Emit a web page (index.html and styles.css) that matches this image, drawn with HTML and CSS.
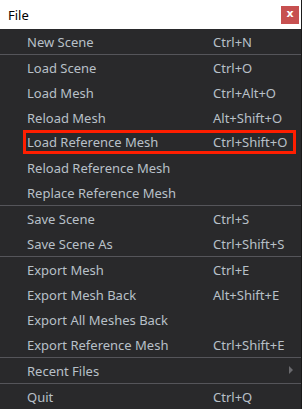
FILE: index.html
```html
<!DOCTYPE html>
<html>
<head>
<meta charset="utf-8">
<link rel="stylesheet" href="styles.css">
</head>
<body>
<div class="window">
  <div class="titlebar">
    <span class="title">File</span>
    <span class="close">x</span>
  </div>
  <div class="menu">
    <div class="item"><span class="label">New Scene</span><span class="key">Ctrl+N</span></div>
    <div class="sep"></div>
    <div class="item"><span class="label">Load Scene</span><span class="key">Ctrl+O</span></div>
    <div class="item"><span class="label">Load Mesh</span><span class="key">Ctrl+Alt+O</span></div>
    <div class="item"><span class="label">Reload Mesh</span><span class="key">Alt+Shift+O</span></div>
    <div class="item marked"><span class="label">Load Reference Mesh</span><span class="key">Ctrl+Shift+O</span></div>
    <div class="item"><span class="label">Reload Reference Mesh</span><span class="key"></span></div>
    <div class="item"><span class="label">Replace Reference Mesh</span><span class="key"></span></div>
    <div class="sep"></div>
    <div class="item"><span class="label">Save Scene</span><span class="key">Ctrl+S</span></div>
    <div class="item"><span class="label">Save Scene As</span><span class="key">Ctrl+Shift+S</span></div>
    <div class="sep"></div>
    <div class="item"><span class="label">Export Mesh</span><span class="key">Ctrl+E</span></div>
    <div class="item"><span class="label">Export Mesh Back</span><span class="key">Alt+Shift+E</span></div>
    <div class="item"><span class="label">Export All Meshes Back</span><span class="key"></span></div>
    <div class="item"><span class="label">Export Reference Mesh</span><span class="key">Ctrl+Shift+E</span></div>
    <div class="sep"></div>
    <div class="item"><span class="label">Recent Files</span><span class="key"></span><span class="arrow"></span></div>
    <div class="sep"></div>
    <div class="item"><span class="label">Quit</span><span class="key">Ctrl+Q</span></div>
  </div>
</div>
</body>
</html>
```

FILE: styles.css
```css
html, body {
  margin: 0;
  padding: 0;
  background: #ffffff;
}
.window {
  width: 301px;
  height: 409px;
  border-right: 1px solid #1a1a1a;
  display: flex;
  flex-direction: column;
  font-family: "Noto Sans", "Open Sans", sans-serif;
  font-size: 13px;
}
.titlebar {
  height: 29px;
  background: #ffffff;
  display: flex;
  align-items: center;
  justify-content: space-between;
  padding: 0 2px 0 8px;
  box-sizing: border-box;
}
.title {
  color: #000000;
  font-size: 13px;
}
.close {
  width: 18px;
  height: 18px;
  background: #c75050;
  color: #ffffff;
  font-family: "DejaVu Sans", sans-serif;
  font-weight: bold;
  font-size: 11px;
  line-height: 16px;
  text-align: center;
  margin-top: 1px;
}
.menu {
  flex: 1;
  background: #29292b;
  display: flex;
  flex-direction: column;
}
.item {
  height: 25px;
  display: flex;
  align-items: center;
  padding-left: 27px;
  color: #b8c0c8;
  position: relative;
  box-sizing: border-box;
}
.label {
  width: 186px;
}
.key {
  flex: 1;
}
.marked {
  border: 3px solid #ff1e00;
  margin: 0 5px 1px 23px;
  padding-left: 1px;
  height: 24px;
}
.sep {
  height: 1px;
  background: #55555a;
}
.arrow {
  position: absolute;
  right: 8px;
  top: 8px;
  width: 0;
  height: 0;
  border-top: 4px solid transparent;
  border-bottom: 4px solid transparent;
  border-left: 4px solid #6a6a6e;
}
```
